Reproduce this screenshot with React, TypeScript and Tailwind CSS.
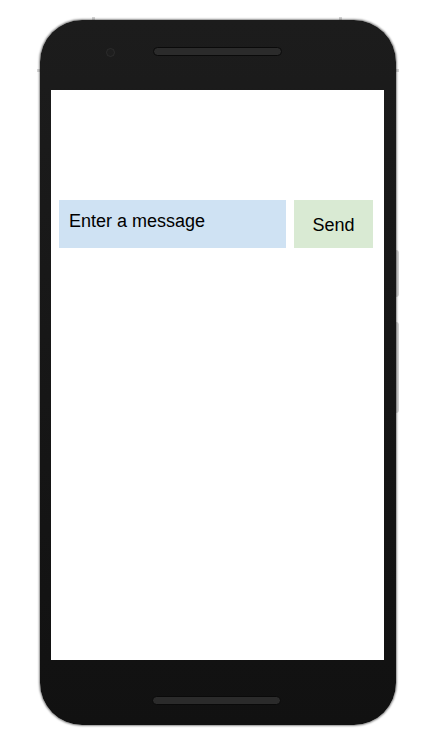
import React from "react";

export default function App() {
  return (
    <div className="w-[427px] h-[739px] bg-white pt-[20px] pl-[40px]" style={{ fontFamily: '"Liberation Sans", Arial, sans-serif' }}>
      <div className="relative w-[356px] h-[705px]">
        {/* side buttons and antenna marks */}
        <div className="absolute right-[-3px] top-[230px] w-[3px] h-[47px] bg-[#d4d4d4] rounded-r-sm" />
        <div className="absolute right-[-3px] top-[302px] w-[3px] h-[91px] bg-[#d4d4d4] rounded-r-sm" />
        <div className="absolute left-[52px] top-[-3px] w-[3px] h-[3px] bg-[#d6d6d6]" />
        <div className="absolute left-[299px] top-[-3px] w-[3px] h-[3px] bg-[#d6d6d6]" />
        <div className="absolute left-[-3px] top-[49px] w-[3px] h-[3px] bg-[#d6d6d6]" />
        <div className="absolute right-[-3px] top-[49px] w-[3px] h-[3px] bg-[#d6d6d6]" />
        <div className="relative flex flex-col w-[356px] h-[705px] rounded-[42px] bg-gradient-to-b from-[#1c1c1c] to-[#111111] shadow-[0_0_2px_1px_rgba(0,0,0,0.45)] overflow-hidden">
          {/* top bezel */}
          <div className="h-[70px] flex items-start pt-[27px] pl-[66px]">
            <div className="w-[9px] h-[9px] rounded-full bg-[#1e1e1e] border border-[#2c2c2c] mt-[1px]" />
            <div className="ml-[38px] w-[129px] h-[9px] rounded-full bg-[#2b2b2b] border border-[#0a0a0a]" />
          </div>
          {/* screen */}
          <div className="ml-[11px] mr-[12px] h-[570px] bg-white">
            <div className="flex pt-[110px] pl-[8px] gap-[8px]">
              <div className="w-[227px] h-[48px] bg-[#cfe2f3] pl-[10px] pt-[11px] text-[18px] leading-[21px] text-black">
                Enter a message
              </div>
              <div className="w-[79px] h-[48px] bg-[#d9ead3] flex items-center justify-center pt-[3px] text-[18px] text-black">
                Send
              </div>
            </div>
          </div>
          {/* bottom bezel */}
          <div className="h-[65px] flex justify-center pt-[36px]">
            <div className="ml-[-3px] w-[129px] h-[9px] rounded-full bg-[#2b2b2b] border border-[#0a0a0a]" />
          </div>
        </div>
      </div>
    </div>
  );
}
